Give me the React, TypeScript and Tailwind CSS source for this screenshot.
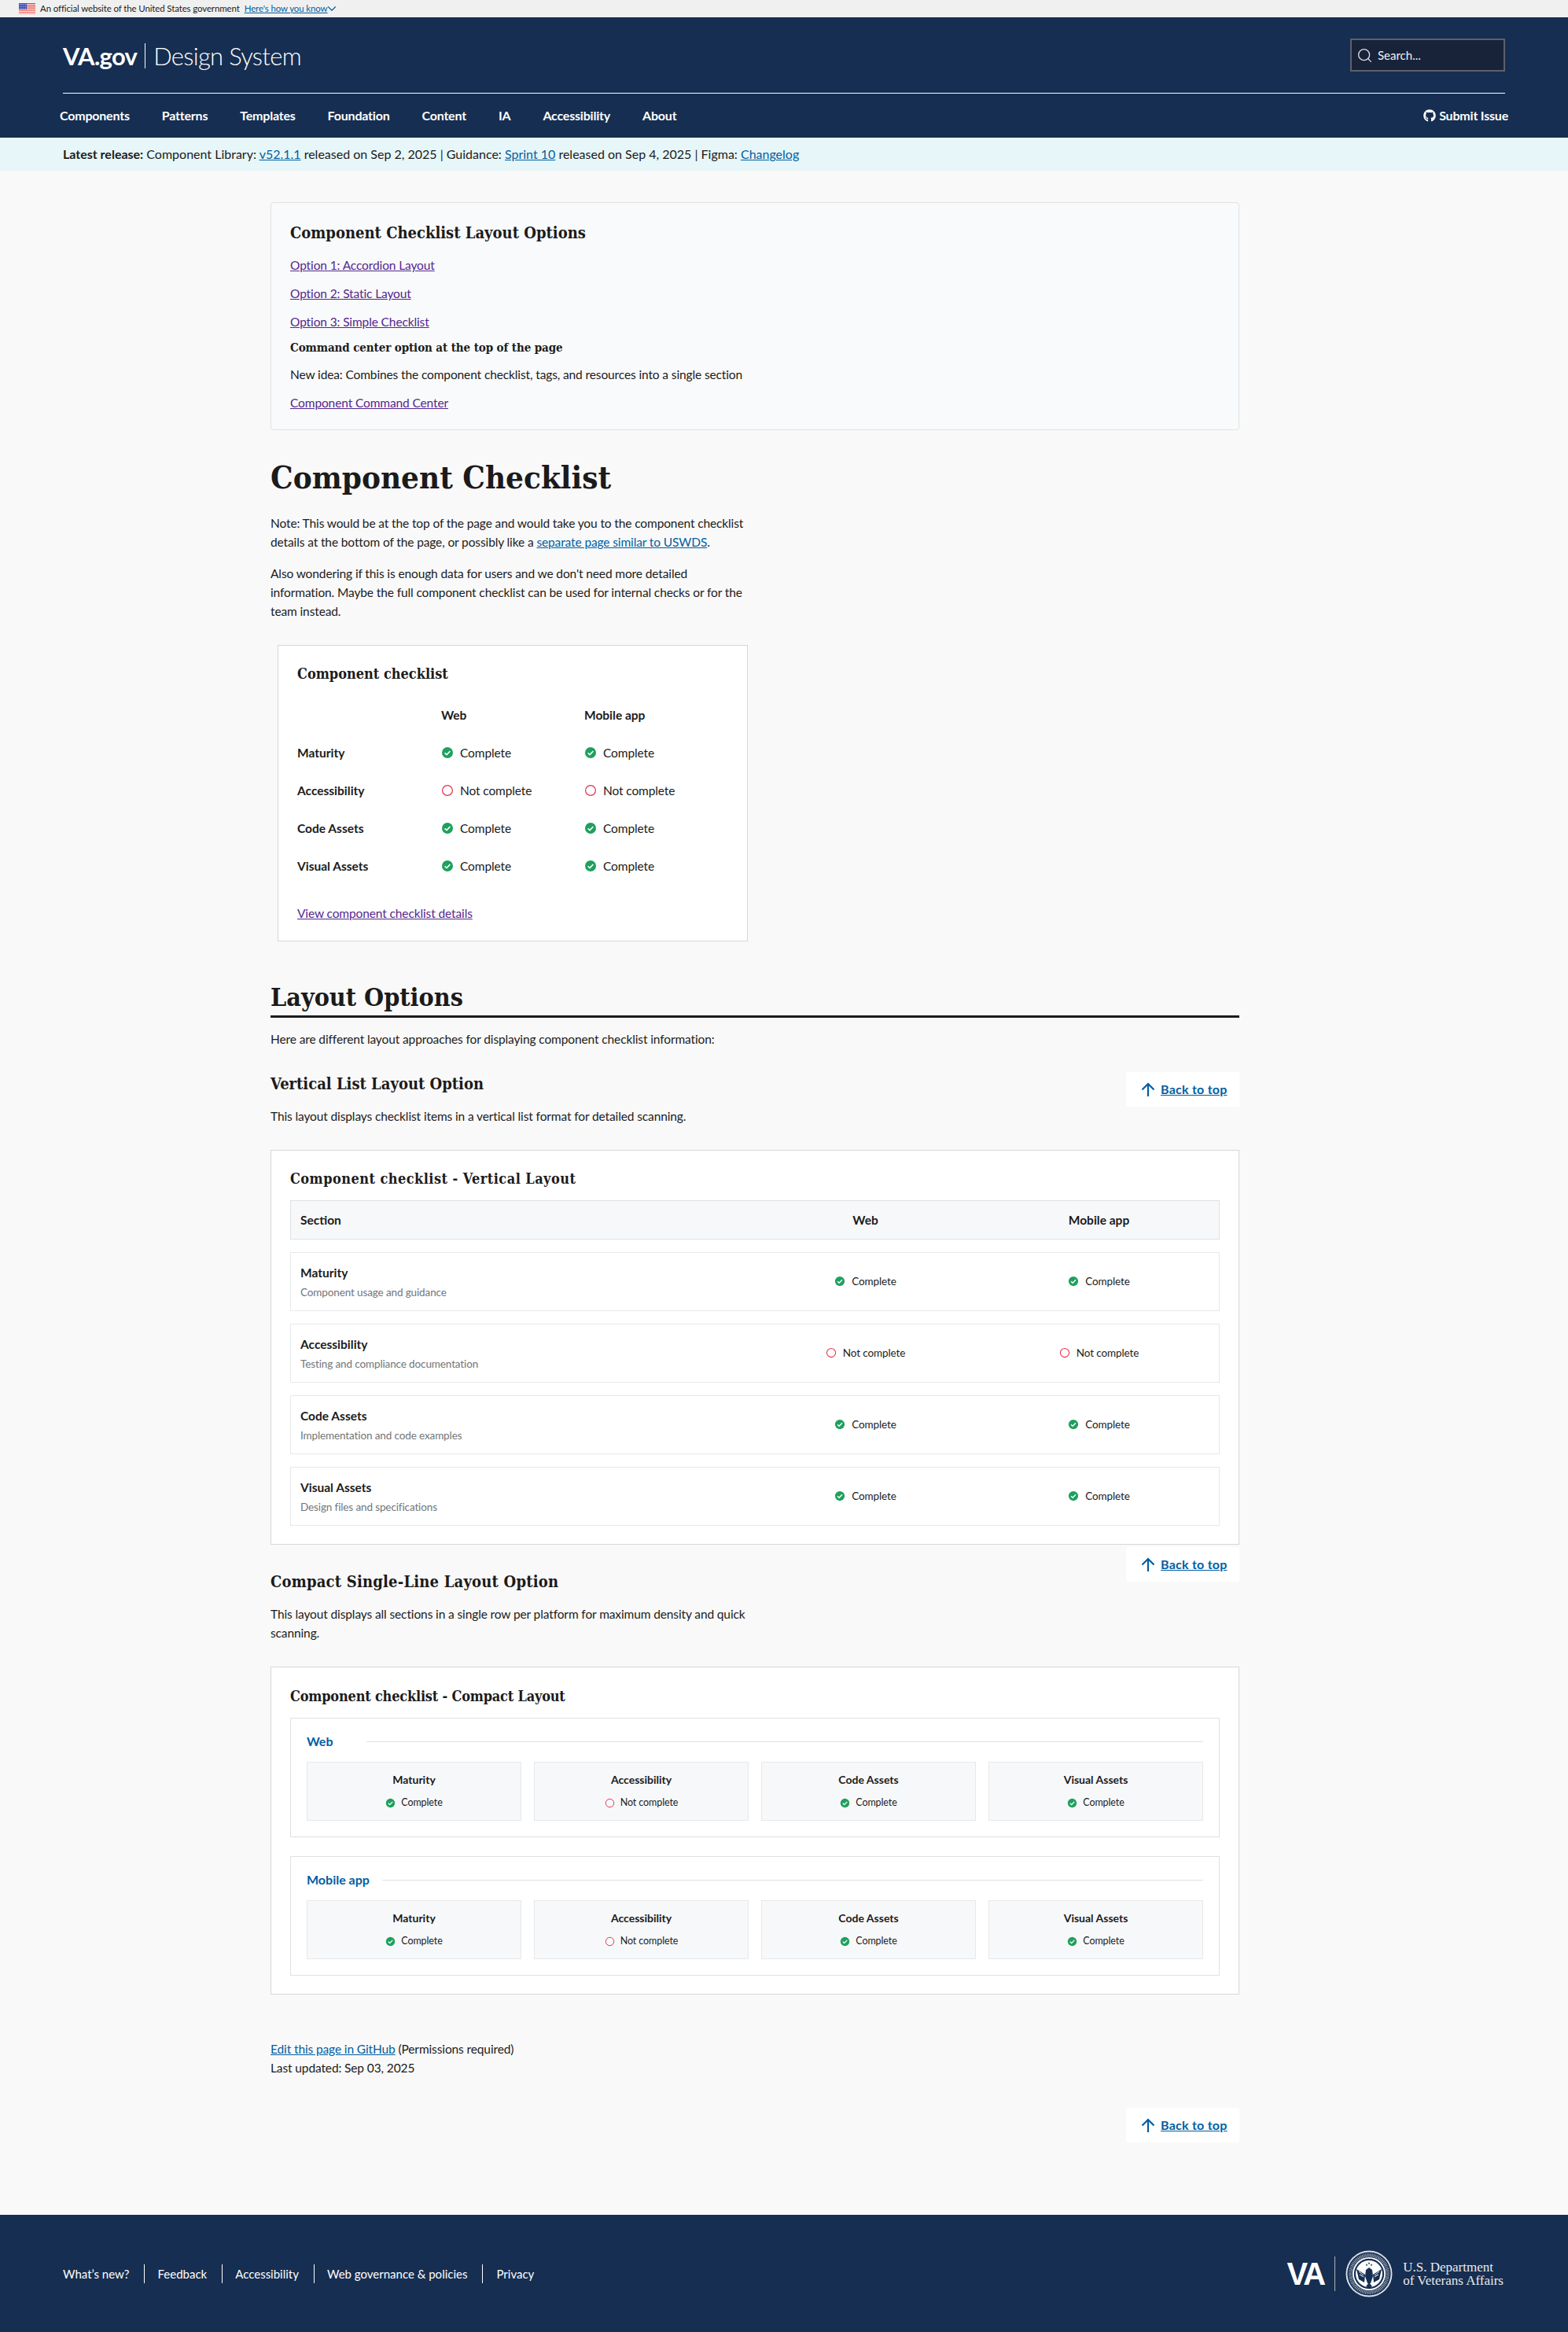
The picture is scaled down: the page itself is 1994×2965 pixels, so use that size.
import React from "react";
import { FaGithub } from "react-icons/fa";
import { Search, ChevronDown } from "lucide-react";

const sans = "[font-family:Lato,'Noto_Sans',sans-serif]";

function Check({ size = 16 }: { size?: number }) {
  return (
    <svg width={size} height={size} viewBox="0 0 16 16" className="shrink-0">
      <circle cx="8" cy="8" r="7" fill="#1fa05e" />
      <path d="M4.6 8.2l2.4 2.4 4.4-4.6" fill="none" stroke="#fff" strokeWidth="1.6" />
    </svg>
  );
}

function Cross({ size = 16 }: { size?: number }) {
  return (
    <svg width={size} height={size} viewBox="0 0 16 16" className="shrink-0">
      <circle cx="8" cy="8" r="6.4" fill="none" stroke="#e3304a" strokeWidth="1.2" />
    </svg>
  );
}

function Status({ ok, size, className }: { ok: boolean; size?: number; className?: string }) {
  return (
    <span className={"inline-flex items-center " + (className ?? "gap-2")}>
      {ok ? <Check size={size} /> : <Cross size={size} />}
      <span>{ok ? "Complete" : "Not complete"}</span>
    </span>
  );
}

function BackToTop({ className }: { className: string }) {
  return (
    <a className={"float-right flex h-[44px] w-[144px] items-center gap-[7px] rounded-l-[4px] bg-white pl-[19px] " + className}>
      <svg width="18" height="18" viewBox="0 0 18 18" className="shrink-0">
        <path d="M9 18V2M1.5 9.5L9 2l7.5 7.5" fill="none" stroke="#005ea2" strokeWidth="2.2" />
      </svg>
      <span className="text-[16px] font-bold tracking-[0.25px] text-[#005ea2] underline">Back to top</span>
    </a>
  );
}

function Flag() {
  return (
    <svg width="21" height="14" viewBox="0 0 21 14">
      <rect width="21" height="14" fill="#fff" />
      <rect y="0" width="21" height="1.1" fill="#d83933" />
      <rect y="2.2" width="21" height="1.1" fill="#d83933" />
      <rect y="4.4" width="21" height="1.1" fill="#d83933" />
      <rect y="6.6" width="21" height="1.1" fill="#d83933" />
      <rect y="8.8" width="21" height="1.1" fill="#e8564c" />
      <rect y="11" width="21" height="1.1" fill="#e8564c" />
      <rect y="13" width="21" height="1" fill="#e8a09a" />
      <rect width="10" height="8" fill="#3d4fb0" />
      {[1.5, 4, 6.5].map((y) =>
        [1.5, 3.8, 6.1, 8.4].map((x) => <rect key={x + "-" + y} x={x - 0.5} y={y - 0.5} width="1" height="1" fill="#dfe3f5" />)
      )}
    </svg>
  );
}

function Seal() {
  const ticks = Array.from({ length: 72 }, (_, i) => (i * 360) / 72);
  return (
    <svg width="60" height="60" viewBox="0 0 60 60">
      <circle cx="30" cy="30" r="29.5" fill="#fff" fillOpacity="0.85" />
      <circle cx="30" cy="30" r="27.6" fill="#162e51" />
      {ticks.map((a) => (
        <rect key={a} x="29.5" y="4" width="1" height="4.5" fill="#fff" fillOpacity="0.62" transform={`rotate(${a} 30 30)`} />
      ))}
      <circle cx="30" cy="30" r="21" fill="#fff" />
      <circle cx="30" cy="30" r="19.2" fill="#162e51" />
      <circle cx="30" cy="30" r="17" fill="#fff" />
      <path d="M14 24l11 7-1 10-7-4-3-13zM46 24l-11 7 1 10 7-4 3-13z" fill="#162e51" />
      <path d="M26 25l4-3 4 3 1 8-3 9h-4l-3-9 1-8z" fill="#162e51" />
      <path d="M26 46l4-5 4 5-4 2z" fill="#162e51" />
      <path d="M17 27l6 5M43 27l-6 5M18 31l5 3M42 31l-5 3" stroke="#fff" strokeWidth="1" />
      <path d="M27 17l1 2-1 1-1-1zM30 15l1 2-1 1-1-1zM33 17l1 2-1 1-1-1z" fill="#162e51" />
    </svg>
  );
}

const rows: [string, string, boolean][] = [
  ["Maturity", "Component usage and guidance", true],
  ["Accessibility", "Testing and compliance documentation", false],
  ["Code Assets", "Implementation and code examples", true],
  ["Visual Assets", "Design files and specifications", true],
];

const serif = "[font-family:'DejaVu_Serif',serif] [font-stretch:condensed] font-bold";

function Platform({ name, labelClass, top }: { name: string; labelClass: string; top: string }) {
  return (
    <div className={"border border-[#dfe1e2] px-[20px] pb-[20px] pt-[17px] " + top}>
      <div className="mb-[14px] flex items-center">
        <span className={"text-[16px] leading-[24px] font-bold tracking-normal text-[#005ea2] " + labelClass}>{name}</span>
        <span className="ml-[16px] h-px flex-1 bg-[#dfe1e2]" />
      </div>
      <div className="grid grid-cols-4 gap-[16px]">
        {rows.map(([label, , ok]) => (
          <div key={label} className="h-[75px] border border-[#e6e8ea] bg-[#f7f8fa] pt-[12px] text-center">
            <div className="text-[14px] leading-[20px] font-bold tracking-normal">{label}</div>
            <div className="mt-[9px] text-[12.5px] leading-[20px] tracking-[-0.1px]">
              <Status ok={ok} size={13} className="gap-[7px]" />
            </div>
          </div>
        ))}
      </div>
    </div>
  );
}

export default function App() {
  return (
    <div className={"min-h-[2965px] bg-[#f9f9f9] text-[15.5px] leading-[24px] tracking-[-0.12px] text-[#1b1b1b] " + sans}>
      <div className="flex h-[22px] items-center gap-[6px] bg-[#f0f0f0] pl-[24px] text-[11.5px] leading-[22px] tracking-[-0.13px]">
        <Flag />
        <span>An official website of the United States government</span>
        <a className="flex items-center text-[#005ea2]">
          <span className="underline">Here's how you know</span>
          <ChevronDown size={18} strokeWidth={1.5} className="-ml-[4px]" />
        </a>
      </div>

      <header className="h-[153px] bg-[#162e51] text-white">
        <div className="mx-[80px] flex h-[97px] items-center justify-between border-b border-white">
          <div className="mt-[2px] flex items-center text-[31px] leading-[40px]">
            <span className="font-bold tracking-[-0.7px]">VA.gov</span>
            <span className="ml-[10px] mr-[10px] h-[32px] w-px bg-white" />
            <span className="font-light tracking-[-0.7px]">Design System</span>
          </div>
          <div className="flex h-[42px] w-[197px] items-center gap-[6px] border-2 border-[#5b616b] bg-[#18233a] pl-[6px] text-[15px] tracking-normal text-[#f0f0f0]">
            <Search size={21} strokeWidth={1.5} className="text-[#dcdee0]" />
            <span>Search...</span>
          </div>
        </div>
        <nav className="flex h-[56px] items-center justify-between pl-[76px] pr-[76px] text-[16px] font-bold tracking-[-0.2px]">
          <div className="flex gap-[41px]">
            <a>Components</a>
            <a>Patterns</a>
            <a>Templates</a>
            <a>Foundation</a>
            <a>Content</a>
            <a>IA</a>
            <a>Accessibility</a>
            <a>About</a>
          </div>
          <a className="flex items-center gap-[4px]">
            <FaGithub size={16} />
            Submit Issue
          </a>
        </nav>
      </header>

      <div className="flex h-[42px] items-center bg-[#e7f6f8] pl-[80px] text-[16px] tracking-normal">
        <p>
          <b>Latest release:</b> Component Library: <a className="text-[#005ea2] underline">v52.1.1</a> released on Sep 2, 2025 | Guidance:{" "}
          <a className="text-[#005ea2] underline">Sprint 10</a> released on Sep 4, 2025 | Figma: <a className="text-[#005ea2] underline">Changelog</a>
        </p>
      </div>

      <main className="ml-[344px] flow-root w-[1232px] pb-[92px] pt-[40px]">
        <section className="rounded-[4px] border border-[#dfe1e2] bg-[#f9fafb] px-[24px] pb-[22px] pt-[24px]">
          <h3 className={"text-[20px] leading-[28px] tracking-normal " + serif}>Component Checklist Layout Options</h3>
          <p className="mt-[15px]"><a className="text-[#54278f] underline">Option 1: Accordion Layout</a></p>
          <p className="mt-[12px]"><a className="text-[#54278f] underline">Option 2: Static Layout</a></p>
          <p className="mt-[12px]"><a className="text-[#54278f] underline">Option 3: Simple Checklist</a></p>
          <h4 className={"mt-[9px] text-[15px] tracking-[-0.1px] " + serif}>Command center option at the top of the page</h4>
          <p className="mt-[10px]">New idea: Combines the component checklist, tags, and resources into a single section</p>
          <p className="mt-[12px]"><a className="text-[#54278f] underline">Component Command Center</a></p>
        </section>

        <h1 className={"mt-[32px] text-[40px] leading-[56px] tracking-normal " + serif}>Component Checklist</h1>
        <p className="mt-[18px] max-w-[608px]">
          Note: This would be at the top of the page and would take you to the component checklist details at the bottom of the page, or possibly like a{" "}
          <a className="text-[#005ea2] underline">separate page similar to USWDS</a>.
        </p>
        <p className="mt-[16px] max-w-[608px]">
          Also wondering if this is enough data for users and we don't need more detailed information. Maybe the full component checklist can be used for internal checks or for the team instead.
        </p>

        <section className="ml-[9px] mt-[31px] w-[598px] border border-[#d6d7d9] bg-white px-[24px] pb-[23px] pt-[22px]">
          <h3 className={"text-[18px] leading-[28px] tracking-normal " + serif}>Component checklist</h3>
          <div className="mt-[26px] grid grid-cols-[183px_182px_1fr] font-bold tracking-normal">
            <span />
            <span>Web</span>
            <span>Mobile app</span>
          </div>
          <div className="mt-[12px]">
            {rows.map(([label, , ok]) => (
              <div key={label} className="grid h-[48px] grid-cols-[183px_182px_1fr] items-center">
                <b className="tracking-normal">{label}</b>
                <Status ok={ok} />
                <Status ok={ok} />
              </div>
            ))}
          </div>
          <p className="mt-[24px]"><a className="text-[#54278f] underline">View component checklist details</a></p>
        </section>

        <h2 className={"mt-[48px] border-b-[3px] border-[#1b1b1b] text-[32px] leading-[46px] tracking-normal " + serif}>Layout Options</h2>
        <p className="mt-[15px]">Here are different layout approaches for displaying component checklist information:</p>

        <BackToTop className="mt-[30px]" />
        <h3 className={"pt-[31px] text-[20px] leading-[28px] tracking-normal " + serif}>Vertical List Layout Option</h3>
        <p className="mt-[15px]">This layout displays checklist items in a vertical list format for detailed scanning.</p>

        <section className="mt-[31px] border border-[#d6d7d9] bg-white px-[24px] pb-[23px] pt-[22px]">
          <h3 className={"text-[18px] leading-[28px] tracking-[0.45px] " + serif}>Component checklist - Vertical Layout</h3>
          <div className="mt-[13px] grid h-[50px] grid-cols-[2fr_1fr_1fr] items-center gap-[16px] border border-[#dfe1e2] bg-[#f7f8fa] px-[12px] font-bold tracking-normal">
            <span>Section</span>
            <span className="text-center">Web</span>
            <span className="text-center">Mobile app</span>
          </div>
          <div className="mt-[16px] flex flex-col gap-[16px]">
            {rows.map(([label, sub, ok]) => (
              <div key={label} className="grid h-[75px] grid-cols-[2fr_1fr_1fr] items-center gap-[16px] border border-[#e6e8ea] px-[12px]">
                <div>
                  <div className="font-bold tracking-normal">{label}</div>
                  <div className="mt-[3px] text-[13.5px] leading-[20px] text-[#71767a]">{sub}</div>
                </div>
                <div className="text-center text-[13.5px] tracking-[-0.1px]"><Status ok={ok} size={14} className="gap-[8px]" /></div>
                <div className="text-center text-[13.5px] tracking-[-0.1px]"><Status ok={ok} size={14} className="gap-[8px]" /></div>
              </div>
            ))}
          </div>
        </section>

        <BackToTop className="mt-[3px]" />
        <h3 className={"pt-[33px] text-[20px] leading-[28px] tracking-[0.2px] " + serif}>Compact Single-Line Layout Option</h3>
        <p className="mt-[15px] max-w-[608px]">This layout displays all sections in a single row per platform for maximum density and quick scanning.</p>

        <section className="mt-[31px] border border-[#d6d7d9] bg-white px-[24px] pb-[23px] pt-[23px]">
          <h3 className={"text-[18px] leading-[28px] tracking-[-0.2px] " + serif}>Component checklist - Compact Layout</h3>
          <Platform name="Web" labelClass="w-[60px]" top="mt-[13px]" />
          <Platform name="Mobile app" labelClass="" top="mt-[24px]" />
        </section>

        <p className="mt-[57px]">
          <a className="text-[#005ea2] underline">Edit this page in GitHub</a> (Permissions required)
        </p>
        <p>Last updated: Sep 03, 2025</p>

        <BackToTop className="mt-[39px]" />
      </main>

      <footer className="flex h-[149px] items-center justify-between bg-[#162e51] pl-[80px] pr-[82px] text-[15px] tracking-normal text-white">
        <div className="flex items-center">
          <a className="border-r border-white pr-[19px]">What’s new?</a>
          <a className="border-r border-white pl-[16px] pr-[19px]">Feedback</a>
          <a className="border-r border-white pl-[16px] pr-[19px]">Accessibility</a>
          <a className="border-r border-white pl-[16px] pr-[19px]">Web governance &amp; policies</a>
          <a className="pl-[17px]">Privacy</a>
        </div>
        <div className="flex items-center">
          <span className="[font-family:'Liberation_Sans',sans-serif] text-[40px] leading-[40px] font-bold tracking-[-3px]">VA</span>
          <span className="ml-[14px] h-[44px] w-px bg-[#aeb0b5]" />
          <span className="ml-[13px]"><Seal /></span>
          <span className="ml-[13px] [font-family:'Liberation_Serif',serif] text-[17px] leading-[17px] tracking-normal text-[#e8e9ec]">
            U.S. Department
            <br />
            of Veterans Affairs
          </span>
        </div>
      </footer>
    </div>
  );
}
